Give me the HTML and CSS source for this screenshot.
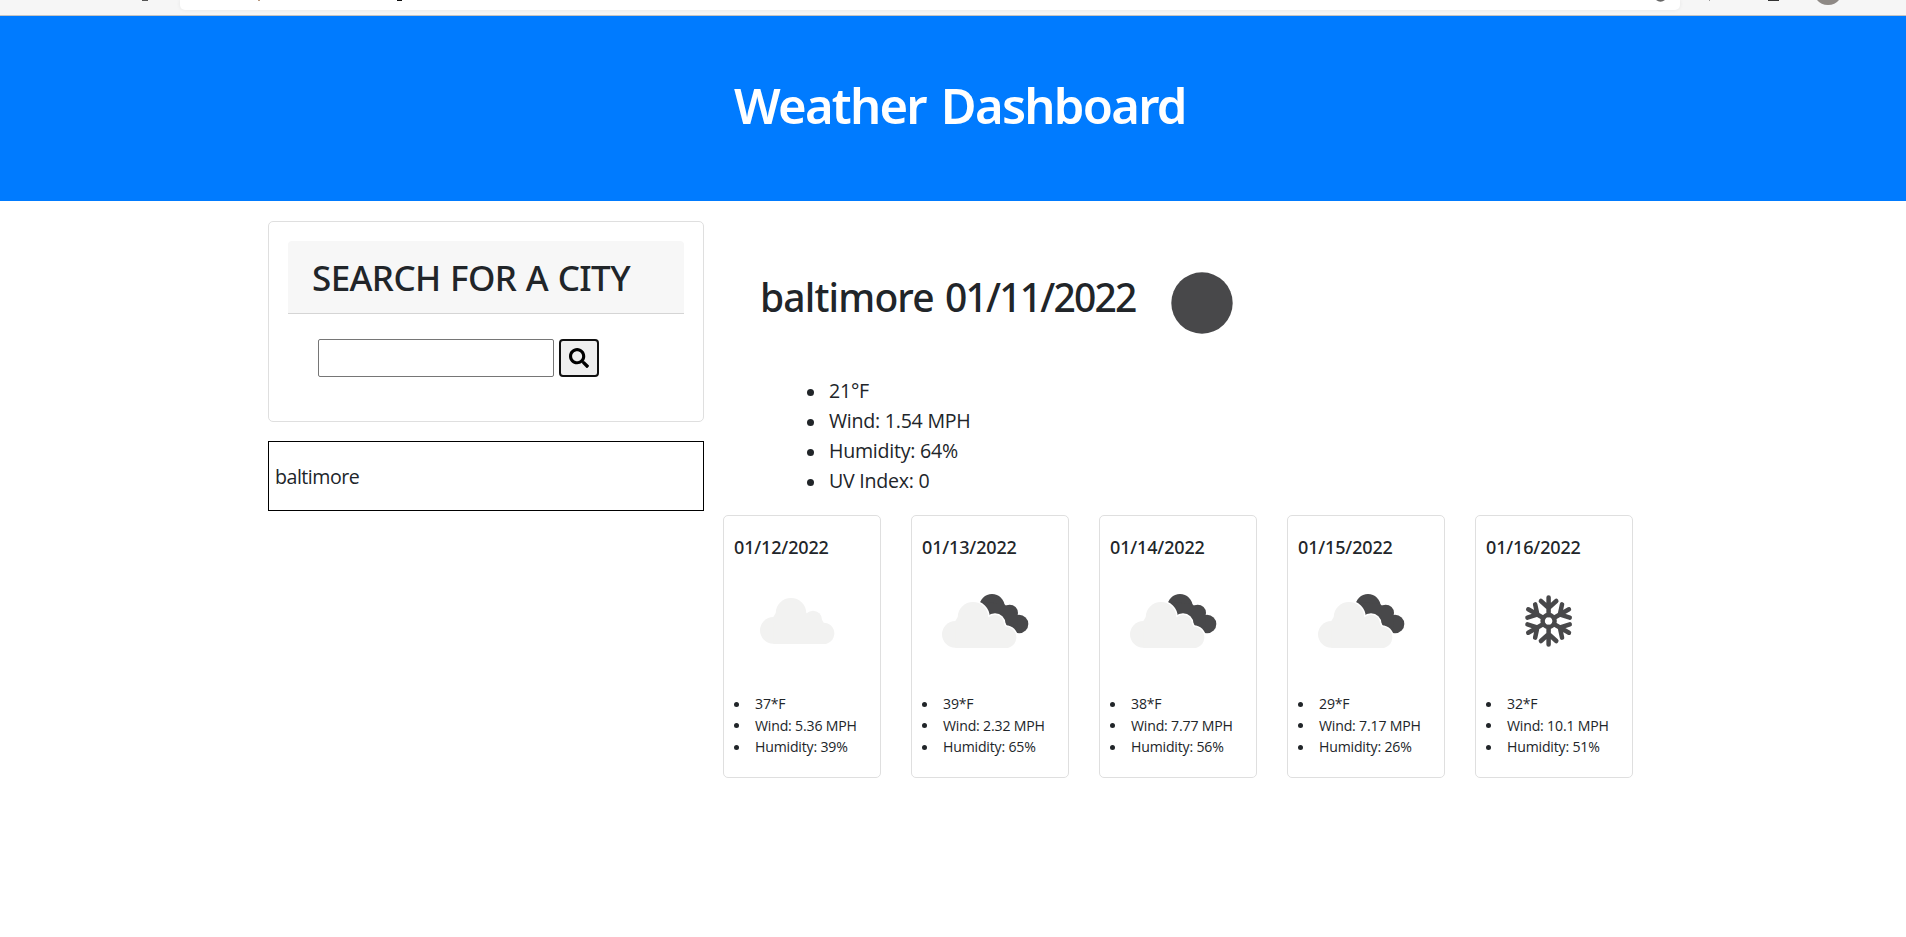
FILE: index.html
```html
<!DOCTYPE html>
<html lang="en">
<head>
<meta charset="utf-8">
<title>Weather Dashboard</title>
<link rel="stylesheet" href="styles.css">
</head>
<body>
<svg class="defs" aria-hidden="true">
  <defs>
    <g id="cloud">
      <circle cx="175" cy="376" r="40"/><circle cx="228" cy="325" r="46"/>
      <circle cx="294" cy="344" r="27"/><circle cx="326" cy="385" r="32"/>
      <path d="M175 336L182 325L274 325L321 344L326 353V417H175Z"/>
    </g>
    <symbol id="cloudy" viewBox="96 201 300 300"><use href="#cloud" fill="#f2f2f1"/></symbol>
    <symbol id="broken" viewBox="660 201 300 300">
      <g fill="#48484a">
        <circle cx="831" cy="305" r="38"/><circle cx="884" cy="324" r="25"/><circle cx="912" cy="357" r="28"/>
        <path d="M797 290L867 297L908 330L905 385L860 365L815 345Z"/>
      </g>
      <use href="#cloud" x="546" y="12" fill="#fff" stroke="#fff" stroke-width="9"/>
      <use href="#cloud" x="546" y="12" fill="#f2f2f1"/>
    </symbol>
    <g id="arm"><path d="M0-6V-23.5M-7.7-20L0-13L7.700-20"/></g>
    <symbol id="snow" viewBox="0 0 100 100">
      <g transform="translate(49.6 49)" fill="none" stroke="#48484a" stroke-width="4.500" stroke-linecap="round">
        <circle r="6"/>
        <use href="#arm"/><use href="#arm" transform="rotate(60)"/><use href="#arm" transform="rotate(120)"/>
        <use href="#arm" transform="rotate(180)"/><use href="#arm" transform="rotate(240)"/><use href="#arm" transform="rotate(300)"/>
      </g>
    </symbol>
  </defs>
</svg>
<div class="browser-bar">
  <div class="address"></div>
  <svg class="marks" viewBox="0 0 1906 15">
    <path d="M142 0h6v1h-6z" fill="#555"/><path d="M258 0h2v1h-2z" fill="#b99a80"/>
    <path d="M397 0h5v1h-5z" fill="#111"/><path d="M1656 0h9q-4.500 3.500-9 0z" fill="#666"/>
    <path d="M1709 0h1v1h-1z" fill="#999"/><path d="M1768 0h11v1h-11z" fill="#333"/>
    <path d="M1817 0h22q-4 5-11 5t-11-5z" fill="#8e8985"/>
  </svg>
</div>
<header class="hero"><h1>Weather Dashboard</h1></header>
<main class="layout">
  <aside class="sidebar">
    <section class="search-card">
      <h2 class="search-title">SEARCH FOR A CITY</h2>
      <form class="search-form">
        <input class="search-input" type="text" aria-label="City">
        <button class="search-button" type="button" aria-label="Search">
          <svg viewBox="0 0 512 512"><path d="M505 442.700L405.300 343c-4.500-4.500-10.600-7-17-7H372c27.600-35.300 44-79.700 44-128C416 93.100 322.900 0 208 0S0 93.100 0 208s93.100 208 208 208c48.300 0 92.700-16.400 128-44v16.300c0 6.400 2.500 12.500 7 17l99.700 99.700c9.400 9.400 24.600 9.400 33.900 0l28.300-28.300c9.400-9.400 9.400-24.600.1-34zM208 336c-70.700 0-128-57.200-128-128 0-70.700 57.200-128 128-128 70.700 0 128 57.200 128 128 0 70.700-57.200 128-128 128z"/></svg>
        </button>
      </form>
    </section>
    <div class="history">baltimore</div>
  </aside>
  <section class="weather">
    <div class="current">
      <h2>baltimore <span class="date">01/11/2022</span></h2>
      <svg class="current-icon" viewBox="0 0 62 62"><circle cx="31" cy="31" r="30.700" fill="#48484a"/></svg>
    </div>
    <ul class="current-list"><li>21°F</li><li>Wind: 1.54 MPH</li><li>Humidity: 64%</li><li>UV Index: 0</li></ul>
    <div class="forecast">
      <article class="day"><h3>01/12/2022</h3><svg><use href="#cloudy"/></svg><ul><li>37*F</li><li>Wind: 5.36 MPH</li><li>Humidity: 39%</li></ul></article>
      <article class="day"><h3>01/13/2022</h3><svg><use href="#broken"/></svg><ul><li>39*F</li><li>Wind: 2.32 MPH</li><li>Humidity: 65%</li></ul></article>
      <article class="day"><h3>01/14/2022</h3><svg><use href="#broken"/></svg><ul><li>38*F</li><li>Wind: 7.77 MPH</li><li>Humidity: 56%</li></ul></article>
      <article class="day"><h3>01/15/2022</h3><svg><use href="#broken"/></svg><ul><li>29*F</li><li>Wind: 7.17 MPH</li><li>Humidity: 26%</li></ul></article>
      <article class="day"><h3>01/16/2022</h3><svg><use href="#snow"/></svg><ul><li>32*F</li><li>Wind: 10.1 MPH</li><li>Humidity: 51%</li></ul></article>
    </div>
  </section>
</main>
</body>
</html>
```
FILE: styles.css
```css
* { box-sizing: border-box; }
body { margin: 0; background: #fff; color: #212529; font-family: "Open Sans", "Noto Sans", sans-serif; font-size: 19.6px; line-height: 30px; }
h1, h2, h3, ul { margin: 0; padding: 0; }
h1, h2, h3 { font-family: "Noto Sans", "Open Sans", sans-serif; }
ul { list-style: none; }
.defs { position: absolute; width: 0; height: 0; }

.browser-bar { position: relative; height: 16px; padding-left: 180px; background: #f6f6f6; border-bottom: 1px solid #c4c4c4; overflow: hidden; }
.address { width: 1500px; height: 10px; background: #fff; border-radius: 0 0 5px 5px; box-shadow: 0 0 4px rgba(0, 0, 0, .07); }
.marks { position: absolute; left: 0; top: 0; width: 1906px; height: 15px; }

.hero { height: 185px; padding: 59px 0 0 734px; background: #007bff; color: #fff; }
.hero h1 { font-size: 49px; font-weight: 600; line-height: 60px; letter-spacing: -1.75px; word-spacing: 4px; white-space: nowrap; }

.layout { display: grid; grid-template-columns: 436px 910px; column-gap: 19px; padding: 20px 0 0 268px; }
.search-card { height: 201px; padding: 19px; border: 1px solid #dfdfdf; border-radius: 5px; }
.search-title { height: 73px; padding: 16px 0 0 24px; background: #f7f7f7; border-bottom: 1px solid #d5d5d5; border-radius: 4px 4px 0 0; font-size: 35px; font-weight: 500; line-height: 42px; letter-spacing: -.6px; word-spacing: 1px; white-space: nowrap; }
.search-form { display: flex; gap: 5px; padding: 25px 0 0 30px; }
.search-input { width: 236px; height: 38px; margin: 0; border: 1px solid #767676; border-radius: 2px; background: #fff; }
.search-button { display: flex; align-items: center; justify-content: center; width: 40px; height: 38px; padding: 0; border: 2px solid #101010; border-radius: 4px; background: #efefef; }
.search-button svg { width: 20px; height: 20px; }
.history { height: 70px; margin-top: 19px; padding: 20px 0 0 6px; border: 1px solid #000; letter-spacing: -.5px; }

.current { display: flex; gap: 36px; height: 155px; padding: 51px 0 0 37px; }
.current h2 { width: 375px; padding-top: 1px; font-size: 39px; font-weight: 500; line-height: 48px; letter-spacing: -.84px; word-spacing: 2px; white-space: nowrap; }
.current h2 .date { letter-spacing: -1.8px; }
.current-icon { width: 62px; height: 62px; }
.current-list { height: 139px; padding-left: 84px; letter-spacing: -.25px; }
.current-list li, .day li { display: flex; align-items: center; white-space: nowrap; }
.current-list li::before { content: ""; width: 7px; height: 7px; margin: 2px 15px 0 0; border-radius: 50%; background: #212529; }

.forecast { display: flex; gap: 30px; }
.day { width: 158px; height: 263px; padding: 20px 0 0 10px; border: 1px solid #dfdfdf; border-radius: 5px; }
.day h3 { font-size: 18px; font-weight: 500; line-height: 22px; letter-spacing: -.15px; }
.day svg { display: block; width: 100px; height: 100px; margin: 14px 0 21px 13px; }
.day ul { font-size: 14.1px; line-height: 21.6px; letter-spacing: -.18px; }
.day li::before { content: ""; width: 5px; height: 5px; margin: 1px 16px 0 0; border-radius: 50%; background: #212529; }
```
